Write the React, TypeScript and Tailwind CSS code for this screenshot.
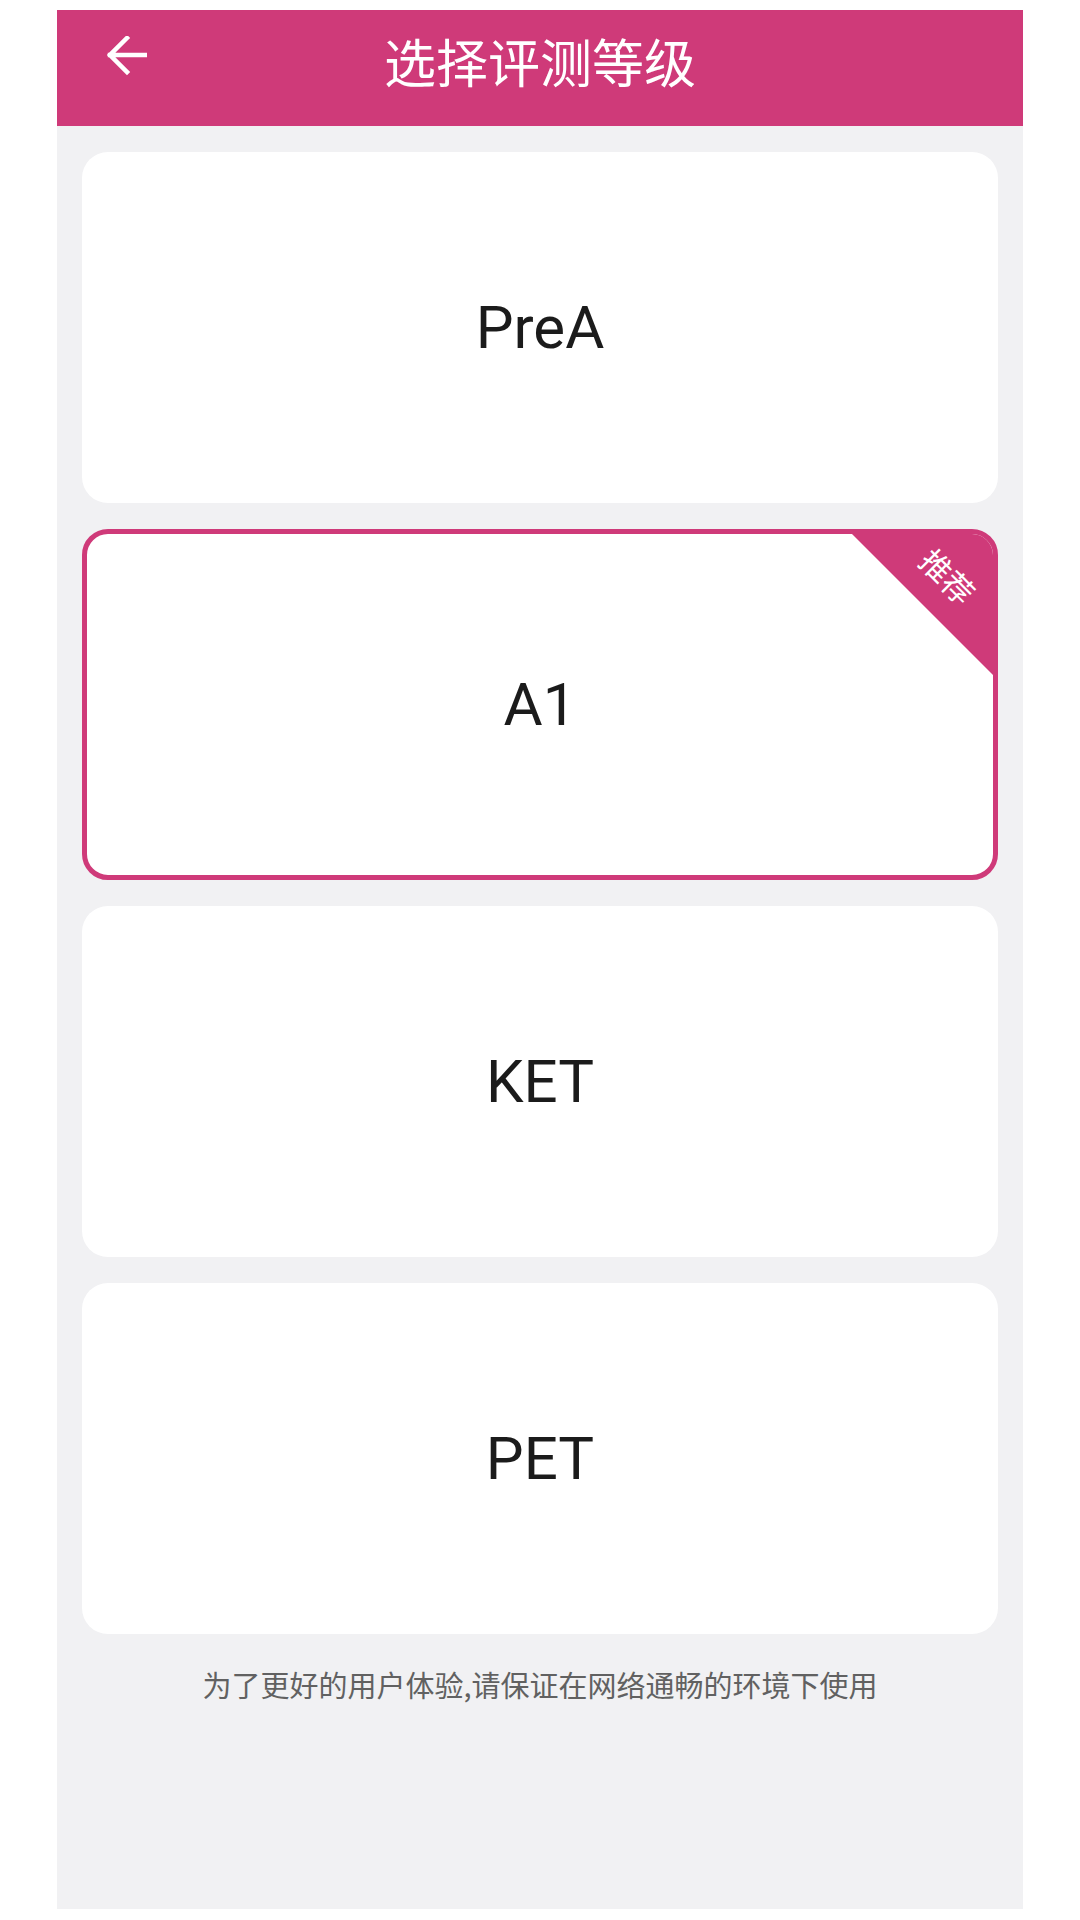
const levels = ['PreA', 'A1', 'KET', 'PET'];

function BackArrow() {
  return (
    <svg width="40" height="40" viewBox="0 0 40 40" fill="none" className="text-white">
      <path
        d="M39 19H3M20 2L3 19L20 36"
        stroke="currentColor"
        strokeWidth="4.5"
        strokeLinecap="square"
        strokeLinejoin="miter"
      />
    </svg>
  );
}

function LevelCard({ name, recommended }: { name: string; recommended?: boolean }) {
  return (
    <div
      className={
        recommended
          ? 'relative h-[351px] rounded-[26px] border-[5px] border-[#cf3a79] bg-white overflow-hidden flex items-center justify-center'
          : 'relative h-[351px] rounded-[26px] bg-white flex items-center justify-center'
      }
    >
      <span className="font-['Roboto',sans-serif] text-[60px] leading-none text-[#1b1b1b]">{name}</span>
      {recommended && (
        <>
          <div className="absolute top-0 right-0 w-[141px] h-[141px] bg-[#cf3a79] [clip-path:polygon(0_0,100%_0,100%_100%)]" />
          <span className="absolute top-[23px] right-[5px] w-[80px] h-[38px] rotate-45 text-center text-[31px] leading-[38px] text-white font-['Noto_Sans_CJK_SC',sans-serif]">
            推荐
          </span>
        </>
      )}
    </div>
  );
}

export default function App() {
  return (
    <div className="min-h-[1920px] w-[1080px] bg-white pt-[10px]">
      <div className="ml-[57px] w-[966px] h-[1899px] bg-[#f1f1f3] flex flex-col">
        <header className="h-[116px] bg-[#cf3a79] grid grid-cols-[1fr_auto_1fr] items-start">
          <div className="pl-[50px] pt-[26px]">
            <BackArrow />
          </div>
          <h1 className="pt-[21px] text-[52px] leading-[60px] text-white font-normal font-['Noto_Sans_CJK_SC',sans-serif]">
            选择评测等级
          </h1>
          <div />
        </header>

        <div className="px-[25px] pt-[26px] flex flex-col gap-[26px]">
          {levels.map((l) => (
            <LevelCard key={l} name={l} recommended={l === 'A1'} />
          ))}
        </div>

        <p className="mt-[30px] text-center text-[29px] leading-[40px] text-[#616161] font-['Noto_Sans_CJK_SC',sans-serif]">
          为了更好的用户体验,请保证在网络通畅的环境下使用
        </p>
      </div>
    </div>
  );
}
